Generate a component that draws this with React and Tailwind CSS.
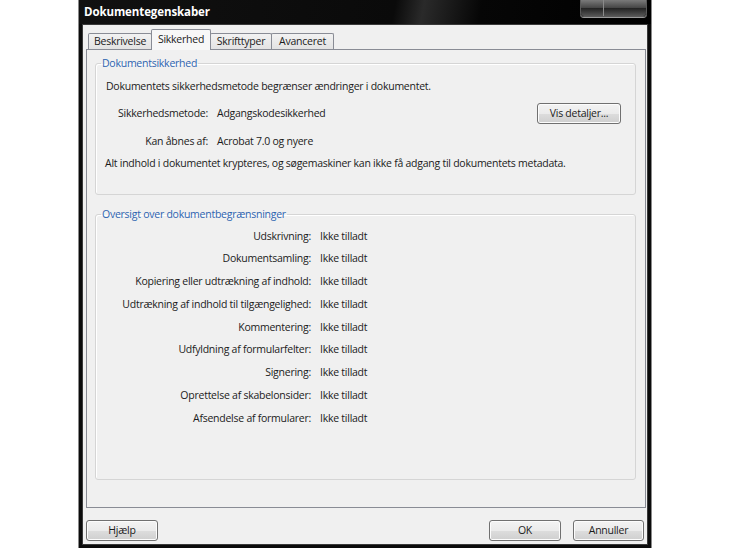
import React from 'react';

const tabs = [
    { label: 'Beskrivelse', w: 'w-[64px]' },
    { label: 'Sikkerhed', w: 'w-[60px]' },
    { label: 'Skrifttyper', w: 'w-[62px]' },
    { label: 'Avanceret', w: 'w-[63px]' },
];

const restrictions = [
    'Udskrivning:',
    'Dokumentsamling:',
    'Kopiering eller udtrækning af indhold:',
    'Udtrækning af indhold til tilgængelighed:',
    'Kommentering:',
    'Udfyldning af formularfelter:',
    'Signering:',
    'Oprettelse af skabelonsider:',
    'Afsendelse af formularer:',
];

const btn =
    'h-[21px] rounded-[3px] border border-[#707070] bg-[linear-gradient(#f3f3f3_0%,#ebebeb_50%,#dddddd_51%,#cfcfcf_100%)] shadow-[inset_0_0_0_1px_#fcfcfc] text-[10.5px] text-[#1b1b1b] flex items-center justify-center';

const Tab = ({ label, w, active }) =>
    active ? (
        <div className={`relative z-10 -ml-px mb-[-1px] h-[21px] ${w} flex items-start justify-center pt-[2px] border border-b-0 border-[#898c95] bg-[#f7f7f7] rounded-t-[2px]`}>
            {label}
        </div>
    ) : (
        <div className={`-ml-px first:ml-0 h-[16px] ${w} flex items-center justify-center border border-b-0 border-[#898c95] bg-[linear-gradient(#f2f2f2,#e3e3e3)] rounded-t-[2px]`}>
            {label}
        </div>
    );

const Group = ({ title, className, children }) => (
    <fieldset className={`border border-[#d5d5d5] rounded-[3px] shadow-[inset_1px_1px_0_#ffffff] ${className}`}>
        <legend className="ml-[5px] px-[1px] leading-[15px] text-[#2e64b0]">{title}</legend>
        {children}
    </fieldset>
);

export default function App() {
    return (
        <div className="w-[730px] h-[548px] bg-white flex justify-center font-['Open_Sans','Noto_Sans',sans-serif] text-[10.5px] tracking-[-0.25px] text-[#1b1b1b]">
            <div className="w-[574px] h-full flex flex-col border-x border-[#8a8a8a] bg-[#0b0b0b]">
                {/* title bar */}
                <div className="h-[24px] flex items-start bg-[linear-gradient(100deg,#111_0%,#0a0a0a_55%,#2a2a2a_60%,#1c1c1c_64%,#060606_70%,#000_100%)]">
                    <span className="pl-[5px] pt-[4px] text-white font-bold text-[11.5px] tracking-[-0.1px] leading-[15px]">Dokumentegenskaber</span>
                    <div className="ml-auto mr-[4px] flex h-[17px] rounded-b-[4px] border border-t-0 border-[#5a5a5a] overflow-hidden shadow-[0_1px_0_#9a9a9a]">
                        <div className="w-[23px] bg-[linear-gradient(#7a7a7a,#444_50%,#222_51%,#555)] border-r border-[#8a8a8a]" />
                        <div className="w-[42px] bg-[linear-gradient(#7a7a7a,#444_50%,#222_51%,#555)]" />
                    </div>
                </div>

                {/* body */}
                <div className="flex-1 mx-[3px] mb-[3px] bg-[#f0f0f0] flex flex-col border border-[#3a3a3a]">
                    <div className="flex items-end h-[24px] pl-[5px]">
                        {tabs.map((t) => (
                            <Tab key={t.label} label={t.label} w={t.w} active={t.label === 'Sikkerhed'} />
                        ))}
                    </div>

                    <div className="ml-[3px] mr-[1px] h-[459px] border border-[#898c95] bg-[#f0f0f0] pl-[8px] pr-[9px] pt-[6px]">
                        <Group title="Dokumentsikkerhed" className="h-[139px]">
                            <div className="pl-[10px] mt-[7px] leading-[16px]">
                                Dokumentets sikkerhedsmetode begrænser ændringer i dokumentet.
                            </div>
                            <div className="mt-[9px] flex items-center h-[21px] gap-[9px]">
                                <span className="w-[112px] text-right">Sikkerhedsmetode:</span>
                                <span>Adgangskodesikkerhed</span>
                                <button className={`${btn} ml-auto mr-[14px] w-[84px]`}>Vis detaljer...</button>
                            </div>
                            <div className="mt-[10px] flex items-center h-[16px] gap-[9px]">
                                <span className="w-[112px] text-right">Kan åbnes af:</span>
                                <span>Acrobat 7.0 og nyere</span>
                            </div>
                            <div className="pl-[9px] mt-[5px] leading-[16px]">
                                Alt indhold i dokumentet krypteres, og søgemaskiner kan ikke få adgang til dokumentets metadata.
                            </div>
                        </Group>

                        <Group title="Oversigt over dokumentbegrænsninger" className="mt-[12px] h-[273px]">
                            <div className="pt-[3px]">
                                {restrictions.map((r) => (
                                    <div key={r} className="h-[22.75px] flex items-center gap-[9px]">
                                        <span className="w-[215px] text-right">{r}</span>
                                        <span>Ikke tilladt</span>
                                    </div>
                                ))}
                            </div>
                        </Group>
                    </div>

                    <div className="mt-[12px] flex items-center px-[3px]">
                        <button className={`${btn} w-[72px]`}>Hjælp</button>
                        <button className={`${btn} ml-auto w-[72px] border-[#3c7fb1] shadow-[inset_0_0_0_1px_#bfe3f5]`}>OK</button>
                        <button className={`${btn} ml-[12px] w-[71px]`}>Annuller</button>
                    </div>
                </div>
            </div>
        </div>
    );
}
